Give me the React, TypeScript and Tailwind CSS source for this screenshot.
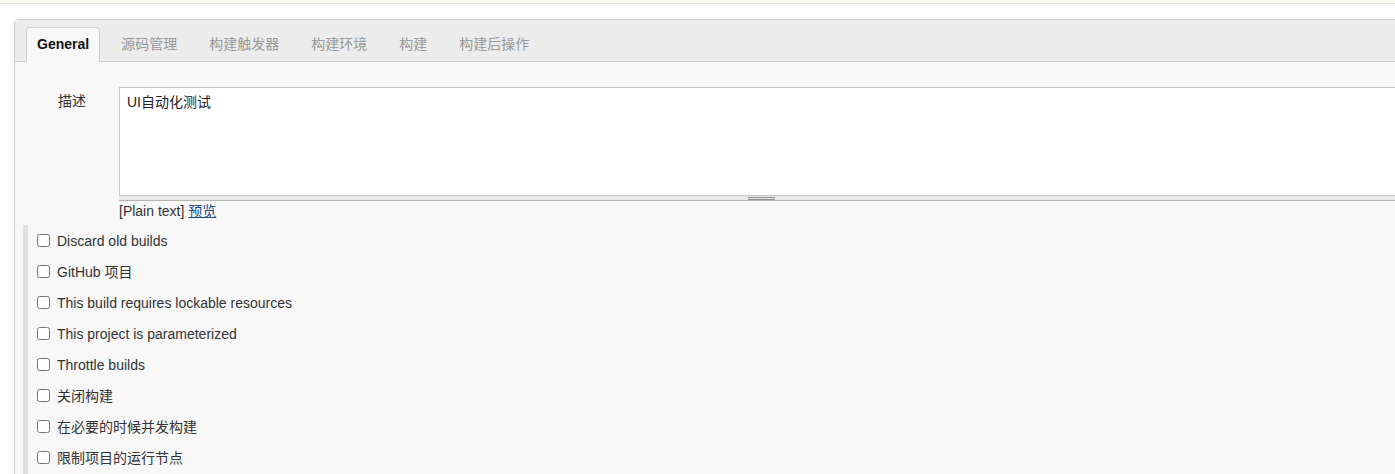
import React from "react";

const tabs = ["General", "源码管理", "构建触发器", "构建环境", "构建", "构建后操作"];

const options = [
  "Discard old builds",
  "GitHub 项目",
  "This build requires lockable resources",
  "This project is parameterized",
  "Throttle builds",
  "关闭构建",
  "在必要的时候并发构建",
  "限制项目的运行节点",
];

export default function App() {
  return (
    <div className="h-[474px] w-full overflow-hidden bg-white font-['Liberation_Sans','Noto_Sans_CJK_SC',sans-serif] text-[14px] leading-[16px] text-[#333]">
      <div className="h-[4px] border-b border-[#e3e3da] bg-[#f8f8ef]" />
      <div className="ml-[14px] mt-[15px] w-[1400px] rounded-tl-[4px] border border-[#cfcfcf] bg-[#f8f8f8]">
        {/* tab bar */}
        <div className="flex h-[42px] items-end gap-[10px] border-b border-[#cfcfcf] bg-[#ececec] pl-[11px]">
          {tabs.map((t, i) => (
            <div
              key={t}
              className={
                i === 0
                  ? "-mb-px flex h-[35px] items-center rounded-t-[4px] border border-b-0 border-[#cfcfcf] bg-[#f8f8f8] px-[10px] pb-[2px] font-bold text-[#111]"
                  : "-mb-px flex h-[35px] items-center border border-transparent px-[10px] pb-[2px] text-[#999]"
              }
            >
              {t}
            </div>
          ))}
        </div>

        {/* description */}
        <div className="flex pr-[10px] pt-[25px]">
          <div className="w-[104px] shrink-0 pl-[43px] pt-[6px]">描述</div>
          <div className="flex-1">
            <textarea
              defaultValue="UI自动化测试"
              className="block h-[109px] w-full resize-none border border-[#c8c8c8] bg-white px-[7px] py-[6px] text-[#222] outline-none"
            />
            <div className="flex h-[5px] items-center justify-center border-b border-[#b5b5ad] bg-[#e9e9e9]">
              <div className="h-[3px] w-[27px] border-y border-[#8f8f8f]" />
            </div>
            <div className="mt-[2px]">
              [Plain text]{" "}
              <a href="#" className="text-[#204a87] underline">
                预览
              </a>
            </div>
          </div>
        </div>

        {/* options */}
        <div className="ml-[8px] mt-[6px] border-l-[5px] border-[#e0e0e0] pb-[20px] pl-[9px]">
          {options.map((o) => (
            <label key={o} className="flex h-[31px] items-center gap-[7px]">
              <input type="checkbox" className="h-[13px] w-[13px]" />
              <span>{o}</span>
            </label>
          ))}
        </div>
      </div>
    </div>
  );
}
